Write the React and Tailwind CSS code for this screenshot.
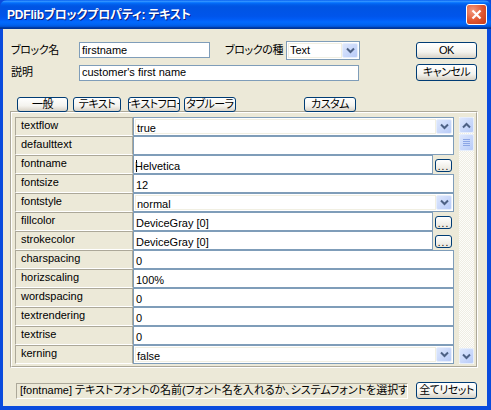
import React from 'react';

const rows = [
  { name: 'textflow', value: 'true', kind: 'select' },
  { name: 'defaulttext', value: '', kind: 'text' },
  { name: 'fontname', value: 'Helvetica', kind: 'browse', caret: true },
  { name: 'fontsize', value: '12', kind: 'text' },
  { name: 'fontstyle', value: 'normal', kind: 'select' },
  { name: 'fillcolor', value: 'DeviceGray [0]', kind: 'browse' },
  { name: 'strokecolor', value: 'DeviceGray [0]', kind: 'browse' },
  { name: 'charspacing', value: '0', kind: 'text' },
  { name: 'horizscaling', value: '100%', kind: 'text' },
  { name: 'wordspacing', value: '0', kind: 'text' },
  { name: 'textrendering', value: '0', kind: 'text' },
  { name: 'textrise', value: '0', kind: 'text' },
  { name: 'kerning', value: 'false', kind: 'select' },
];

const btn =
  'flex items-center justify-center overflow-hidden whitespace-nowrap rounded-[3px] border border-[#003C74] bg-[linear-gradient(to_bottom,#FFFFFF,#F4F3EE_60%,#D8D2C6)] text-[11px] tracking-[-0.5px] leading-none text-black';

function Chevron({ up }) {
  return (
    <svg width="9" height="7" viewBox="0 0 9 7">
      <path
        d={up ? 'M1 5.5 L4.5 2 L8 5.5' : 'M1 1.5 L4.5 5 L8 1.5'}
        fill="none"
        stroke="#4D6185"
        strokeWidth="2"
      />
    </svg>
  );
}

function ArrowBtn({ up, className = '' }) {
  return (
    <div
      className={`flex items-center justify-center rounded-[2px] border border-[#E6EEFC] bg-[linear-gradient(135deg,#DDE7FD,#B8CBF8)] ${className}`}
    >
      <Chevron up={up} />
    </div>
  );
}

function ValueCell({ row }) {
  if (row.kind === 'select') {
    return (
      <div className="flex h-[19px] w-[321px] border border-[#7F9DB9] bg-white p-px">
        <div className="flex flex-1 items-center border border-[#F1EFE2] pl-px pt-[3px] text-[11px]">
          {row.value}
        </div>
        <ArrowBtn className="h-[15px] w-[16px]" />
      </div>
    );
  }
  if (row.kind === 'browse') {
    return (
      <div className="flex h-[19px] w-[321px]">
        <div className="flex h-[19px] w-[300px] items-center border border-[#7F9DB9] bg-white pl-[2px] pt-[3px] text-[11px]">
          {row.caret && <span className="mr-[-2px] h-[12px] w-px border-l border-dashed border-black" />}
          {row.value}
        </div>
        <div className="flex flex-1 items-center justify-center pt-px">
          <div className="flex h-[13px] w-[17px] items-end justify-center rounded-[3px] border border-[#003C74] bg-[linear-gradient(to_bottom,#FFFFFF,#E8E6DC)] pb-px text-[10px] leading-[6px] tracking-[1px]">
            ...
          </div>
        </div>
      </div>
    );
  }
  return (
    <div className="flex h-[19px] w-[321px] items-center border border-[#7F9DB9] bg-white pl-[2px] pt-[3px] text-[11px]">
      {row.value}
    </div>
  );
}

export default function App() {
  return (
    <div className="flex h-[410px] w-[491px] flex-col bg-[#0A4BDD] font-['Liberation_Sans','Noto_Sans_CJK_JP',sans-serif] [font-feature-settings:'palt'] text-black">
      {/* Title bar */}
      <div className="flex h-[29px] items-center justify-between rounded-t-[7px] bg-[linear-gradient(to_bottom,#0058EE_0%,#3593FF_4%,#288EFF_6%,#127DFF_8%,#036FFC_10%,#0262EE_14%,#0057E5_20%,#0054E3_24%,#0055EB_56%,#005BF5_66%,#026AFE_76%,#0062EF_86%,#0052D6_92%,#0040AB_94%,#003092_100%)] pl-[7px] pr-[4px]">
        <span className="text-[12px] font-bold tracking-[-0.2px] text-white [text-shadow:1px_1px_0_#0A1E80]">
          PDFlibブロックプロパティ: テキスト
        </span>
        <div className="flex h-[21px] w-[21px] items-center justify-center rounded-[3px] border border-white bg-[radial-gradient(circle_at_30%_30%,#F39A80,#E0552F_55%,#C43A18)]">
          <svg width="11" height="11" viewBox="0 0 11 11">
            <path d="M1.5 1.5 L9.5 9.5 M9.5 1.5 L1.5 9.5" stroke="white" strokeWidth="2.2" />
          </svg>
        </div>
      </div>

      {/* Body */}
      <div className="mb-[4px] ml-[3px] mr-[4px] flex flex-1 flex-col bg-[#ECE9D8]">
        {/* Name row */}
        <div className="ml-[8px] mt-[12px] flex h-[18px] items-center">
          <span className="w-[68px] whitespace-nowrap text-[11px] tracking-[-0.4px]">ブロック名</span>
          <div className="flex h-[16px] w-[131px] items-center border border-[#7F9DB9] bg-white pl-[2px] text-[11px]">
            firstname
          </div>
          <span className="ml-[15px] w-[61px] whitespace-nowrap text-[11px] tracking-[-0.4px]">ブロックの種</span>
          <div className="flex h-[19px] w-[74px] border border-[#7F9DB9] bg-white p-px">
            <div className="flex flex-1 items-center border border-[#F1EFE2] pl-px text-[11px]">Text</div>
            <ArrowBtn className="h-[15px] w-[16px]" />
          </div>
          <div className={`${btn} ml-[56px] h-[17px] w-[61px]`}>OK</div>
        </div>

        {/* Description row */}
        <div className="ml-[8px] mt-[5px] flex h-[17px] items-center">
          <span className="w-[68px] whitespace-nowrap text-[11px]">説明</span>
          <div className="flex h-[16px] w-[280px] items-center border border-[#7F9DB9] bg-white pl-[2px] text-[11px]">
            customer's first name
          </div>
          <div className={`${btn} ml-[57px] h-[17px] w-[61px]`}>キャンセル</div>
        </div>

        {/* Tabs */}
        <div className="relative z-10 ml-[14px] mt-[16px] flex h-[15px] items-start">
          <div className={`${btn} h-[15px] w-[51px]`}>一般</div>
          <div className={`${btn} ml-[5px] h-[15px] w-[48px]`}>テキスト</div>
          <div className={`${btn} ml-[7px] h-[15px] w-[52px]`}>
            <span className="shrink-0">テキストフロー</span>
          </div>
          <div className={`${btn} ml-[4px] h-[15px] w-[52px]`}>タブルーラ</div>
          <div className={`${btn} ml-[68px] h-[15px] w-[52px]`}>カスタム</div>
        </div>

        {/* Panel */}
        <div className="ml-[7px] mt-[-1px] flex h-[257px] w-[468px] border border-b-white border-l-[#ACA899] border-r-white border-t-[#ACA899]">
          <div className="flex flex-1 border border-b-[#ACA899] border-l-white border-r-[#ACA899] border-t-white pl-[3px] pt-[4px]">
            <div className="flex flex-col">
              {rows.map((row) => (
                <div key={row.name} className="flex h-[19px]">
                  <div className="h-[19px] w-[118px] border border-b-white border-l-[#ACA899] border-r-[#ACA899] border-t-[#ACA899] pl-[5px] text-[11px] leading-[14px]">
                    {row.name}
                  </div>
                  <ValueCell row={row} />
                </div>
              ))}
            </div>
            <div className="ml-[5px] flex h-[247px] w-[15px] flex-col justify-between bg-[repeating-conic-gradient(#EFEDE4_0%_25%,#FDFDFA_0%_50%)] bg-[length:2px_2px]">
              <div className="flex flex-col">
                <ArrowBtn up className="h-[16px] w-[15px]" />
                <div className="mt-px flex h-[17px] w-[15px] flex-col items-center justify-center gap-px rounded-[2px] border border-[#E6EEFC] bg-[linear-gradient(135deg,#DDE7FD,#B8CBF8)]">
                  <div className="h-px w-[7px] bg-[#8CA6E6]" />
                  <div className="h-px w-[7px] bg-[#8CA6E6]" />
                  <div className="h-px w-[7px] bg-[#8CA6E6]" />
                  <div className="h-px w-[7px] bg-[#8CA6E6]" />
                </div>
              </div>
              <ArrowBtn className="h-[16px] w-[15px]" />
            </div>
          </div>
        </div>

        {/* Status row */}
        <div className="ml-[13px] mt-[14px] flex items-center">
          <div className="flex h-[16px] w-[392px] items-center overflow-hidden whitespace-nowrap border border-b-white border-l-[#ACA899] border-r-white border-t-[#ACA899] pl-[3px] text-[11px]">
            <span className="shrink-0">[fontname] テキストフォントの名前(フォント名を入れるか、システムフォントを選択すると自動的に入力されます)</span>
          </div>
          <div className={`${btn} ml-[8px] h-[17px] w-[61px]`}>全てリセット</div>
        </div>
      </div>
    </div>
  );
}
